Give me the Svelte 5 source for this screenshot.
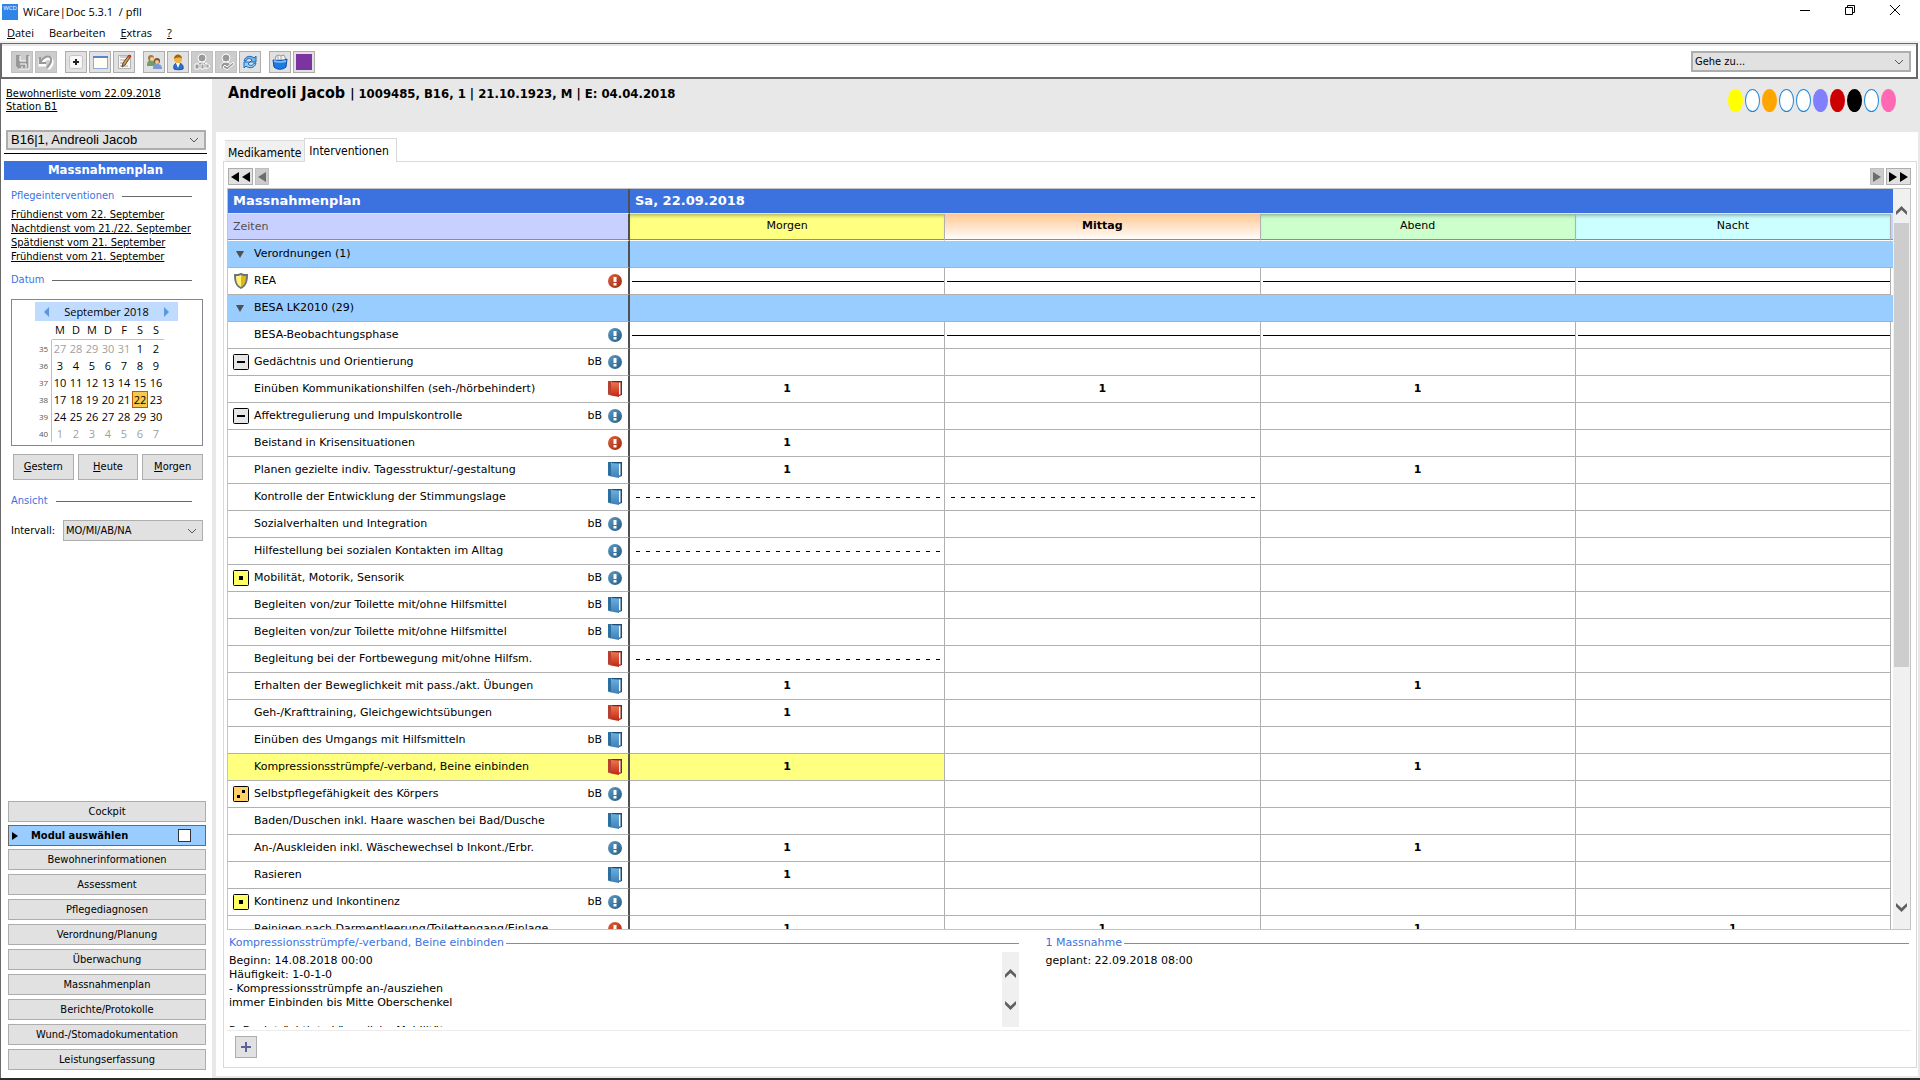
<script lang="ts">
	type Mark = 'info' | 'alert' | 'book' | 'redbook';
	type Row = {
		label: string;
		lead?: 'shield' | 'minus' | 'one' | 'two';
		group?: boolean;
		bb?: boolean;
		mark?: Mark;
		cells?: string[];
		selected?: boolean;
	};

	const shifts = ['Morgen', 'Mittag', 'Abend', 'Nacht'];

	// cell values: '' empty, '1' planned, 'line' continuous, 'dash' on demand
	const rows: Row[] = [
		{ label: 'Verordnungen (1)', group: true },
		{ label: 'REA', lead: 'shield', mark: 'alert', cells: ['line', 'line', 'line', 'line'] },
		{ label: 'BESA LK2010 (29)', group: true },
		{ label: 'BESA-Beobachtungsphase', mark: 'info', cells: ['line', 'line', 'line', 'line'] },
		{ label: 'Gedächtnis und Orientierung', lead: 'minus', bb: true, mark: 'info' },
		{ label: 'Einüben Kommunikationshilfen (seh-/hörbehindert)', mark: 'redbook', cells: ['1', '1', '1', ''] },
		{ label: 'Affektregulierung und Impulskontrolle', lead: 'minus', bb: true, mark: 'info' },
		{ label: 'Beistand in Krisensituationen', mark: 'alert', cells: ['1', '', '', ''] },
		{ label: 'Planen gezielte indiv. Tagesstruktur/-gestaltung', mark: 'book', cells: ['1', '', '1', ''] },
		{ label: 'Kontrolle der Entwicklung der Stimmungslage', mark: 'book', cells: ['dash', 'dash', '', ''] },
		{ label: 'Sozialverhalten und Integration', bb: true, mark: 'info' },
		{ label: 'Hilfestellung bei sozialen Kontakten im Alltag', mark: 'info', cells: ['dash', '', '', ''] },
		{ label: 'Mobilität, Motorik, Sensorik', lead: 'one', bb: true, mark: 'info' },
		{ label: 'Begleiten von/zur Toilette mit/ohne Hilfsmittel', bb: true, mark: 'book' },
		{ label: 'Begleiten von/zur Toilette mit/ohne Hilfsmittel', bb: true, mark: 'book' },
		{ label: 'Begleitung bei der Fortbewegung mit/ohne Hilfsm.', mark: 'redbook', cells: ['dash', '', '', ''] },
		{ label: 'Erhalten der Beweglichkeit mit pass./akt. Übungen', mark: 'book', cells: ['1', '', '1', ''] },
		{ label: 'Geh-/Krafttraining, Gleichgewichtsübungen', mark: 'redbook', cells: ['1', '', '', ''] },
		{ label: 'Einüben des Umgangs mit Hilfsmitteln', bb: true, mark: 'book' },
		{ label: 'Kompressionsstrümpfe/-verband, Beine einbinden', mark: 'redbook', cells: ['1', '', '1', ''], selected: true },
		{ label: 'Selbstpflegefähigkeit des Körpers', lead: 'two', bb: true, mark: 'info' },
		{ label: 'Baden/Duschen inkl. Haare waschen bei Bad/Dusche', mark: 'book' },
		{ label: 'An-/Auskleiden inkl. Wäschewechsel b Inkont./Erbr.', mark: 'info', cells: ['1', '', '1', ''] },
		{ label: 'Rasieren', mark: 'book', cells: ['1', '', '', ''] },
		{ label: 'Kontinenz und Inkontinenz', lead: 'one', bb: true, mark: 'info' },
		{ label: 'Reinigen nach Darmentleerung/Toilettengang/Einlage', mark: 'alert', cells: ['1', '1', '1', '1'] }
	];

	const empty = ['', '', '', ''];

	const services = [
		'Frühdienst vom 22. September',
		'Nachtdienst vom 21./22. September',
		'Spätdienst vom 21. September',
		'Frühdienst vom 21. September'
	];

	const weeks = [
		{ nr: 35, days: [27, 28, 29, 30, 31, 1, 2] },
		{ nr: 36, days: [3, 4, 5, 6, 7, 8, 9] },
		{ nr: 37, days: [10, 11, 12, 13, 14, 15, 16] },
		{ nr: 38, days: [17, 18, 19, 20, 21, 22, 23] },
		{ nr: 39, days: [24, 25, 26, 27, 28, 29, 30] },
		{ nr: 40, days: [1, 2, 3, 4, 5, 6, 7] }
	];

	const modules = [
		'Bewohnerinformationen',
		'Assessment',
		'Pflegediagnosen',
		'Verordnung/Planung',
		'Überwachung',
		'Massnahmenplan',
		'Berichte/Protokolle',
		'Wund-/Stomadokumentation',
		'Leistungserfassung'
	];

	const flags = ['yellow', 'none', 'orange', 'none', 'none', 'violet', 'red', 'black', 'none', 'pink'];

	const tools = [
		[{ id: 'save', off: true }, { id: 'undo', off: true }],
		[{ id: 'add' }, { id: 'window' }, { id: 'edit' }],
		[{ id: 'group' }, { id: 'person' }, { id: 'link', off: true }, { id: 'check', off: true }, { id: 'refresh' }],
		[{ id: 'files' }, { id: 'purple' }]
	] as { id: string; off?: boolean }[][];

	const note =
		'Beginn: 14.08.2018 00:00\nHäufigkeit: 1-0-1-0\n- Kompressionsstrümpfe an-/ausziehen\nimmer Einbinden bis Mitte Oberschenkel\n\nP: Beeinträchtigte körperliche Mobilität';

	let tab = $state('Interventionen');
	let interval = $state('MO/MI/AB/NA');

	function isOutside(week: number, day: number) {
		return (week === 35 && day > 20) || week === 40;
	}
</script>

{#snippet toolIcon(id: string)}
	<svg viewBox="0 0 18 18" width="18" height="18" aria-hidden="true">
		{#if id === 'save'}
			<path d="M3 2h4v6h6V2h3v14H6l-3-3z" fill="#999" />
			<path d="M7 11h6v4M16 3v13H6M7 3v5h6M9 13v2" fill="none" stroke="#fff" />
		{:else if id === 'undo'}
			<path d="M3 6v6h6M4 12C6 6 13 3 15 8c1 4-2 6-4 8" fill="none" stroke="#fff" stroke-width="3" />
			<path d="M3 4v6h6M3 10C6 4 12 1 14 6c1 4-2 6-4 9" fill="none" stroke="#999" stroke-width="2" />
		{:else if id === 'add'}
			<rect x="2.500" y="2.500" width="13" height="13" rx="2" fill="#f8f8f8" stroke="#c4c4c4" />
			<path d="M9 6v6M6 9h6" stroke="#222" stroke-width="2" />
		{:else if id === 'window'}
			<rect x="2.500" y="3.500" width="14" height="12" fill="#fffff4" stroke="#8fabd8" />
			<path d="M2 4h15" stroke="#5c82d8" stroke-width="2" />
		{:else if id === 'edit'}
			<rect x="3.500" y="2.500" width="12" height="13" fill="#f8f8f8" stroke="#b4b4b4" />
			<path d="M5 4h9M5 7h6M5 10h4M5 13h8" stroke="#aaa" />
			<path d="M14 2l2 1-6 9-3 2 1-4z" fill="#d79a4a" stroke="#5c4326" />
			<path d="M14 2l2 1-1 2-2-1z" fill="#cf3a3a" />
		{:else if id === 'group'}
			<path d="M2 13c0-4 1-6 4-6s5 2 5 6z" fill="#6aa06a" />
			<circle cx="6" cy="5" r="3" fill="#a8793e" />
			<circle cx="7" cy="6" r="2" fill="#f2cfa0" />
			<path d="M8 16c0-4 1-5 4-5s5 1 5 5z" fill="#7b9ad4" />
			<circle cx="12" cy="8" r="3" fill="#7a5226" />
			<circle cx="12" cy="9" r="2" fill="#f0c896" />
		{:else if id === 'person'}
			<path d="M5 16c-1-4 1-6 4-6s6 2 5 6c-3 1-6 1-9 0z" fill="#2f6fc9" stroke="#1c4f9c" />
			<path d="M7 10l2 5 2-5z" fill="#fff" />
			<circle cx="9" cy="6" r="4" fill="#f4b53f" />
			<path d="M5 6c0-6 8-6 8 0 0-2-6-2-8 0z" fill="#a0620c" />
		{:else if id === 'link' || id === 'check'}
			<g fill="#999" stroke="#fff">
				<path d="M4 15c-1-4 2-6 5-6s5 2 5 5" />
				<circle cx="9" cy="5" r="4" />
				{#if id === 'link'}
					<path d="M2 11h4v5H2zM8 11h3v5H8zM13 10l4 3-4 3z" />
				{:else}
					<path d="M8 12l2 2 6-5 1 2-7 6-4-3z" />
				{/if}
			</g>
		{:else if id === 'refresh'}
			<path d="M3 8c1-5 7-6 10-3l2-2v6H9l2-2C9 5 6 5 5 8z" fill="#6ab8f2" stroke="#1d66b8" />
			<path d="M15 10c-1 5-7 6-10 3l-2 2V9h6l-2 2c2 2 5 2 6-1z" fill="#8fd0fa" stroke="#1d66b8" />
		{:else if id === 'files'}
			<path d="M4 7l1-4 3-1 2 1 3-1 2 5z" fill="#f4f4f4" stroke="#999" />
			<path d="M7 3v4M10 3v4" stroke="#aaa" />
			<path d="M2 7c3 1 11 1 14-1l-1 8c-3 3-9 3-12 0z" fill="#1f7ae0" stroke="#0f4fa8" />
			<path d="M3 8c3 1 9 1 12 0" stroke="#7cc0ff" fill="none" stroke-width="2" />
		{:else}
			<rect x="1" y="1" width="16" height="16" fill="#7c35a0" />
		{/if}
	</svg>
{/snippet}

{#snippet markIcon(mark: Mark)}
	<svg viewBox="0 0 14 16" width="14" height="16" aria-hidden="true">
		{#if mark === 'info' || mark === 'alert'}
			<circle cx="7" cy="8" r="7" fill={mark === 'info' ? 'url(#blue-ball)' : 'url(#red-ball)'} />
			<path d="M5.500 4h3v5h-3zM5.500 10h3v2.500h-3z" fill="#fff" />
		{:else}
			<path d="M3 0h11v14l-3 1z" fill={mark === 'book' ? '#1b4d78' : '#7c2418'} />
			<path d="M11 1.500h1.500v12H11z" fill="#f2f4f6" />
			<path d="M0 0h3v14.500l-3-1z" fill={mark === 'book' ? '#2a6f9f' : '#b8402e'} />
			<path d="M3 1l8 .5V16l-8-1.500z" fill={mark === 'book' ? 'url(#blue-book)' : 'url(#red-book)'} />
		{/if}
	</svg>
{/snippet}

{#snippet leadIcon(lead: string)}
	{#if lead === 'shield'}
		<svg viewBox="0 0 16 16" width="16" height="16" aria-hidden="true">
			<path d="M1 1c3 0 5 0 7-1 2 1 4 1 7 1 0 7-1 12-7 15C2 13 1 8 1 1z" fill="#6c7278" />
			<path d="M3 3c2 0 3 0 5-1v12c-4-2-5-6-5-11z" fill="#fff27a" />
			<path d="M13 3c-2 0-3 0-5-1v12c4-2 5-6 5-11z" fill="#dcb918" />
		</svg>
	{:else}
		<svg viewBox="0 0 16 16" width="16" height="16" aria-hidden="true">
			<rect
				x="0.500"
				y="0.500"
				width="15"
				height="15"
				rx="1"
				fill={lead === 'minus' ? '#e6e6e6' : lead === 'one' ? '#ffff66' : '#ffd166'}
				stroke="#000"
			/>
			{#if lead === 'minus'}
				<path d="M4 8h8" stroke="#000" stroke-width="2" />
			{:else if lead === 'one'}
				<path d="M6 6h4v4H6z" />
			{:else}
				<path d="M9 4h3v3H9zM4 9h3v3H4z" />
			{/if}
		</svg>
	{/if}
{/snippet}

{#snippet chevron(up: boolean)}
	<svg viewBox="0 0 11 9" width="11" height="9" aria-hidden="true">
		<path d={up ? 'M0 9V5.500L5.500 0 11 5.500V9L5.500 4z' : 'M0 0v3.500L5.500 9 11 3.500V0L5.500 5z'} fill="#606060" />
	</svg>
{/snippet}

{#snippet arrow(left: boolean)}
	<svg viewBox="0 0 8 10" width="8" height="10" aria-hidden="true">
		<path d={left ? 'M8 0v10L0 5z' : 'M0 0v10l8-5z'} fill="currentColor" />
	</svg>
{/snippet}

<div class="app">
	<header class="titlebar">
		<svg class="logo" viewBox="0 0 16 16" width="16" height="16" role="img" aria-label="WCD">
			<defs>
				<linearGradient id="blue-ball" x2="1" y2="1">
					<stop stop-color="#5b9cc8" /><stop offset="1" stop-color="#255a80" />
				</linearGradient>
				<linearGradient id="red-ball" x2="1" y2="1">
					<stop stop-color="#e0613c" /><stop offset="1" stop-color="#9c2a12" />
				</linearGradient>
				<linearGradient id="blue-book" x2="0" y2="1">
					<stop stop-color="#6aaede" /><stop offset="1" stop-color="#3f7fb4" />
				</linearGradient>
				<linearGradient id="red-book" x2="0" y2="1">
					<stop stop-color="#ee7552" /><stop offset="1" stop-color="#c02512" />
				</linearGradient>
			</defs>
			<rect width="16" height="16" fill="#2f86e8" />
			<text x="8" y="6" text-anchor="middle" font-size="6" fill="#fff">WCD</text>
		</svg>
		<span class="caption">WiCare|Doc 5.3.1&nbsp; / pfll</span>
		<div class="window-buttons">
			<button aria-label="Minimieren">
				<svg viewBox="0 0 12 12" width="12" height="12"><path d="M1 6.500h10" stroke="#000" /></svg>
			</button>
			<button aria-label="Verkleinern">
				<svg viewBox="0 0 12 12" width="12" height="12">
					<path d="M1.500 3.500h7v7h-7zM3.500 3V1.500h7v7H9" fill="none" stroke="#000" />
				</svg>
			</button>
			<button aria-label="Schliessen">
				<svg viewBox="0 0 12 12" width="12" height="12"><path d="M1 1l10 10M11 1L1 11" stroke="#000" /></svg>
			</button>
		</div>
	</header>

	<nav class="menubar">
		<button><u>D</u>atei</button>
		<button>Bearbeiten</button>
		<button><u>E</u>xtras</button>
		<button><u>?</u></button>
	</nav>

	<div class="toolbar">
		{#each tools as set}
			<div class="tool-set">
				{#each set as tool}
					<button class="tool" class:tool--off={tool.off} disabled={tool.off} aria-label={tool.id}>
						{@render toolIcon(tool.id)}
					</button>
				{/each}
			</div>
		{/each}
		<select class="goto" aria-label="Gehe zu">
			<option>Gehe zu...</option>
		</select>
	</div>

	<div class="workspace">
		<aside class="sidebar">
			<a class="list-link" href="#liste">Bewohnerliste vom 22.09.2018<br />Station B1</a>
			<select class="resident" aria-label="Bewohner">
				<option>B16|1, Andreoli Jacob</option>
			</select>
			<h2 class="module-title">Massnahmenplan</h2>

			<h3 class="section">Pflegeinterventionen</h3>
			<ul class="services">
				{#each services as service}
					<li><a href="#dienst">{service}</a></li>
				{/each}
			</ul>

			<h3 class="section">Datum</h3>
			<div class="calendar">
				<div class="month">
					<button aria-label="Vorheriger Monat">
						<svg viewBox="0 0 5 10" width="5" height="10"><path d="M5 0v10L0 5z" fill="#5b97dc" /></svg>
					</button>
					<span>September 2018</span>
					<button aria-label="Nächster Monat">
						<svg viewBox="0 0 5 10" width="5" height="10"><path d="M0 0v10l5-5z" fill="#5b97dc" /></svg>
					</button>
				</div>
				<table class="days">
					<thead>
						<tr>
							<td></td>
							{#each ['M', 'D', 'M', 'D', 'F', 'S', 'S'] as day}
								<th>{day}</th>
							{/each}
						</tr>
					</thead>
					<tbody>
						{#each weeks as week}
							<tr>
								<th class="week">{week.nr}</th>
								{#each week.days as day}
									<td
										class:outside={isOutside(week.nr, day)}
										class:today={week.nr === 38 && day === 22}>{day}</td
									>
								{/each}
							</tr>
						{/each}
					</tbody>
				</table>
			</div>
			<div class="day-buttons">
				<button><u>G</u>estern</button>
				<button><u>H</u>eute</button>
				<button><u>M</u>orgen</button>
			</div>

			<h3 class="section">Ansicht</h3>
			<div class="interval">
				<label for="interval">Intervall:</label>
				<select id="interval" bind:value={interval}>
					<option>MO/MI/AB/NA</option>
				</select>
			</div>

			<nav class="modules">
				<button class="module">Cockpit</button>
				<div class="module-pick">
					<svg viewBox="0 0 6 8" width="6" height="8" aria-hidden="true"><path d="M0 0v8l6-4z" /></svg>
					<label for="pick">Modul auswählen</label>
					<input id="pick" type="checkbox" />
				</div>
				{#each modules as module}
					<button class="module">{module}</button>
				{/each}
			</nav>
		</aside>

		<main class="main">
			<header class="patient">
				<h1>Andreoli Jacob <small>| 1009485, B16, 1 | 21.10.1923, M | E: 04.04.2018</small></h1>
				<div class="flags">
					{#each flags as flag}
						<span class="flag flag--{flag}"></span>
					{/each}
				</div>
			</header>

			<div class="content">
				<div class="tabs" role="tablist">
					{#each ['Medikamente', 'Interventionen'] as name}
						<button
							class="tab"
							class:tab--active={tab === name}
							role="tab"
							aria-selected={tab === name}
							onclick={() => (tab = name)}>{name}</button
						>
					{/each}
				</div>

				<section class="panel">
					<div class="pager">
						<button aria-label="Tag zurück">{@render arrow(true)}{@render arrow(true)}</button>
						<button aria-label="Zurück" disabled>{@render arrow(true)}</button>
						<span class="spacer"></span>
						<button aria-label="Vor" disabled>{@render arrow(false)}</button>
						<button aria-label="Tag vor">{@render arrow(false)}{@render arrow(false)}</button>
					</div>

					<div class="plan">
						<div class="plan-view">
							<table class="grid">
								<colgroup>
									<col class="col-name" />
									<col /><col /><col /><col />
									<col class="col-end" />
								</colgroup>
								<thead>
									<tr class="dates">
										<th>Massnahmenplan</th>
										<th colspan="5">Sa, 22.09.2018</th>
									</tr>
									<tr class="shifts">
										<th>Zeiten</th>
										{#each shifts as shift}
											<th class="shift shift--{shift.toLowerCase()}">{shift}</th>
										{/each}
										<td></td>
									</tr>
								</thead>
								<tbody>
									{#each rows as row}
										<tr class:group={row.group} class:selected={row.selected}>
											<th>
												<div class="name">
													<span class="lead">
														{#if row.group}
															<svg viewBox="0 0 8 7" width="8" height="7" aria-hidden="true">
																<path d="M0 0h8L4 7z" fill="#505050" />
															</svg>
														{:else if row.lead}
															{@render leadIcon(row.lead)}
														{/if}
													</span>
													<span class="label">{row.label}</span>
													{#if row.bb}<span>bB</span>{/if}
													{#if row.mark}{@render markIcon(row.mark)}{/if}
												</div>
											</th>
											{#if row.group}
												<td colspan="5"></td>
											{:else}
												{#each row.cells ?? empty as cell}
													<td>
														{#if cell === 'line' || cell === 'dash'}
															<div class={cell}></div>
														{:else}
															{cell}
														{/if}
													</td>
												{/each}
												<td class="end"></td>
											{/if}
										</tr>
									{/each}
								</tbody>
							</table>
						</div>
						<div class="scrollbar">
							{@render chevron(true)}
							<div class="track"><div class="thumb"></div></div>
							{@render chevron(false)}
						</div>
					</div>

					<div class="details">
						<section class="detail detail--text">
							<h3>Kompressionsstrümpfe/-verband, Beine einbinden</h3>
							<div class="note">
								<textarea readonly aria-label="Beschreibung" value={note}></textarea>
								<div class="scrollbar scrollbar--small">
									{@render chevron(true)}
									{@render chevron(false)}
								</div>
							</div>
						</section>
						<section class="detail">
							<h3>1 Massnahme</h3>
							<p>geplant: 22.09.2018 08:00</p>
						</section>
					</div>

					<footer class="actions">
						<button aria-label="Hinzufügen">
							<svg viewBox="0 0 10 10" width="10" height="10">
								<path d="M5 0v10M0 5h10" stroke="#60609c" stroke-width="2" />
							</svg>
						</button>
					</footer>
				</section>
			</div>
		</main>
	</div>
	<div class="taskbar"></div>
</div>

<style>
	:global(body) {
		margin: 0;
	}

	.app {
		--ui: 'DejaVu Sans Condensed', 'DejaVu Sans', sans-serif;
		--wide: 'DejaVu Sans', sans-serif;
		--frame: 'Open Sans', sans-serif;
		--blue: #3c72e0;
		--line: #b0b0b0;
		--face: #e1e1e1;
		--edge: #adadad;

		display: flex;
		flex-direction: column;
		height: 100vh;
		background: #fff;
		color: #000;
		font: 11px/14px var(--wide);
	}

	.app *,
	.app *::before,
	.app *::after {
		box-sizing: border-box;
	}

	svg {
		display: block;
		flex-shrink: 0;
	}

	button,
	select,
	textarea {
		margin: 0;
		padding: 0;
		border: 0;
		border-radius: 0;
		background: none;
		color: inherit;
		font: inherit;
	}

	h1,
	h2,
	h3,
	p,
	ul {
		margin: 0;
		padding: 0;
		font: inherit;
	}

	select {
		appearance: none;
		border: 1px solid var(--edge);
		background: var(--face)
			url("data:image/svg+xml,%3Csvg xmlns='http://www.w3.org/2000/svg' width='10' height='6'%3E%3Cpath d='M1 1l4 4 4-4' fill='none' stroke='%23555'/%3E%3C/svg%3E")
			no-repeat right 5px center;
	}

	/* window frame */
	.titlebar {
		display: flex;
		align-items: center;
		height: 23px;
		padding-left: 2px;
		font: 11px/16px var(--frame);
	}

	.caption {
		margin-left: 5px;
	}

	.window-buttons {
		display: flex;
		gap: 33px;
		margin-left: auto;
		padding: 0 19px 3px 0;
	}

	.menubar {
		display: flex;
		gap: 15px;
		height: 20px;
		padding: 2px 7px 0;
		border-bottom: 2px solid #f0f0f0;
		font: 11px/16px var(--frame);
	}

	.toolbar {
		display: flex;
		align-items: center;
		gap: 8px;
		height: 36px;
		margin-right: 2px;
		padding: 2px 5px 0 9px;
		border: solid #696969;
		border-width: 1px 2px 2px;
		box-shadow: inset 0 2px #e8e8e8;
	}

	.tool-set {
		display: flex;
		gap: 2px;
	}

	.tool {
		display: grid;
		place-items: center;
		width: 22px;
		height: 22px;
		border: 1px solid var(--edge);
		background: var(--face);
	}

	.tool--off {
		background: #ccc;
		border-color: #bfbfbf;
	}

	.goto {
		width: 220px;
		height: 21px;
		margin-left: auto;
		padding-left: 2px;
		border: 2px solid var(--edge);
		font-family: var(--ui);
	}

	.workspace {
		display: flex;
		flex: 1;
		min-height: 0;
		border-left: 1px solid #696969;
	}

	.taskbar {
		height: 2px;
		background: #2d2d30;
	}

	/* sidebar */
	.sidebar {
		display: flex;
		flex-direction: column;
		flex: 0 0 211px;
		padding: 8px 6px 8px 5px;
		font-family: var(--ui);
	}

	a {
		color: inherit;
		text-decoration: underline;
	}

	.list-link {
		line-height: 13px;
	}

	.resident {
		height: 20px;
		margin-top: 17px;
		padding-left: 3px;
		border: 2px solid var(--edge);
		font: 13px/16px 'Liberation Sans', sans-serif;
	}

	.module-title {
		height: 27px;
		margin: 3px -1px 0 -2px;
		padding-top: 7px;
		border-top: 1px solid #000;
		background: var(--blue) linear-gradient(#fff, #fff) no-repeat 0 0 / 100% 7px;
		color: #fff;
		font: bold 13px/18px var(--ui);
		text-align: center;
	}

	.section {
		display: flex;
		align-items: center;
		gap: 8px;
		margin: 9px 14px 0 5px;
		color: var(--blue);
	}

	.section::after {
		content: '';
		flex: 1;
		height: 1px;
		background: #696969;
	}

	.services {
		margin: 5px 5px 0;
		list-style: none;
	}

	.calendar {
		margin: 12px 3px 0 5px;
		padding: 2px 0 3px;
		border: 1px solid #828790;
	}

	.month {
		display: flex;
		justify-content: space-between;
		align-items: center;
		height: 19px;
		margin: 0 24px 0 23px;
		padding: 0 9px;
		background: #bfdbff;
		font: 11px/16px var(--frame);
	}

	.days {
		margin-left: 24px;
		border-spacing: 0;
		font: 11px/16px var(--frame);
		text-align: center;
	}

	.days th,
	.days td {
		width: 16px;
		height: 17px;
		padding: 0;
		font-weight: normal;
	}

	.days thead th {
		height: 19px;
		border-bottom: 1px solid #99c8ff;
	}

	.days .week {
		border-right: 1px solid #99c8ff;
		color: #555;
		font-size: 8px;
	}

	.days .outside {
		color: #a0a0a0;
	}

	.days .today {
		border: 1px solid #c05a00;
		background: #f8c84c;
		line-height: 14px;
	}

	.day-buttons {
		display: flex;
		gap: 4px;
		margin: 8px 3px 5px 7px;
	}

	.day-buttons button {
		flex: 1;
		height: 26px;
		border: 1px solid var(--edge);
		background: var(--face);
	}

	.interval {
		display: flex;
		align-items: center;
		justify-content: space-between;
		margin: 12px 3px 0 5px;
	}

	.interval select {
		width: 140px;
		height: 21px;
		padding-left: 2px;
	}

	.modules {
		display: flex;
		flex-direction: column;
		gap: 4px;
		margin: auto 0 0 2px;
	}

	.module {
		height: 21px;
		border: 1px solid var(--edge);
		background: var(--face);
	}

	.module-pick {
		display: flex;
		align-items: center;
		height: 21px;
		margin: -1px 0;
		padding: 0 14px 0 3px;
		border: 1px solid #696969;
		background: #99ccff;
		font-weight: bold;
	}

	.module-pick label {
		flex: 1;
		margin-left: 13px;
	}

	.module-pick input {
		appearance: none;
		width: 13px;
		height: 13px;
		margin: 0;
		border: 1px solid #333;
		background: #fff;
	}

	/* main area */
	.main {
		display: flex;
		flex: 1;
		flex-direction: column;
		min-width: 0;
		background: #e8e8e8;
	}

	.patient {
		display: flex;
		justify-content: space-between;
		height: 53px;
		padding: 4px 24px 0 16px;
	}

	.patient h1 {
		font: bold 16px/20px var(--ui);
	}

	.patient small {
		font-size: 13px;
	}

	.flags {
		display: flex;
		gap: 2px;
		padding-top: 6px;
	}

	.flag {
		width: 15px;
		height: 23px;
		border-radius: 50%;
	}

	.flag--none {
		border: 1px solid #1e86d8;
		background: #fff;
	}

	.flag--yellow {
		background: #ffff00;
	}

	.flag--orange {
		background: #ffa500;
	}

	.flag--violet {
		background: #8080ff;
	}

	.flag--red {
		background: #cc0000;
	}

	.flag--black {
		background: #000;
	}

	.flag--pink {
		background: #ff69b4;
	}

	.content {
		display: flex;
		flex: 1;
		flex-direction: column;
		min-height: 0;
		margin: 0 2px 2px 4px;
		padding: 6px 1px 8px 7px;
		background: #fff;
	}

	.tabs {
		display: flex;
		align-items: flex-end;
		height: 24px;
		padding-left: 2px;
	}

	.tab {
		height: 21px;
		margin-bottom: 1px;
		padding: 3px 3px 0;
		border-top: 1px solid #d9d9d9;
		background: #f0f0f0;
		font: 12px/16px var(--ui);
	}

	.tab--active {
		z-index: 1;
		height: 24px;
		margin-bottom: 0;
		padding: 1px 7px 0 4px;
		border: 1px solid #d9d9d9;
		border-bottom: 0;
		background: #fff;
	}

	.panel {
		display: flex;
		flex: 1;
		flex-direction: column;
		min-height: 0;
		margin-top: -1px;
		padding: 6px 5px 0 3px;
		border: 1px solid #d9d9d9;
	}

	.pager {
		display: flex;
		gap: 2px;
		height: 17px;
		margin: 0 0 3px 1px;
	}

	.pager button {
		display: flex;
		align-items: center;
		gap: 3px;
		padding: 0 2px;
		border: 1px solid var(--edge);
		background: var(--face);
	}

	.pager button:disabled {
		border-color: #bfbfbf;
		background: #ccc;
		color: #6d6d6d;
	}

	.spacer {
		flex: 1;
	}

	/* plan table */
	.plan {
		display: flex;
		flex: 1;
		min-height: 0;
		border: 1px solid #c4c4c4;
	}

	.plan-view {
		flex: 1;
		overflow: hidden;
	}

	.grid {
		width: 100%;
		border-spacing: 0;
		table-layout: fixed;
	}

	.col-name {
		width: 402px;
	}

	.col-end {
		width: 2px;
	}

	.grid th,
	.grid td {
		height: 27px;
		padding: 0;
		border-right: 1px solid var(--line);
		border-bottom: 1px solid var(--line);
		font-weight: bold;
		text-align: center;
	}

	.grid th:first-child {
		border-right: 2px solid #505050;
		font-weight: normal;
		text-align: left;
	}

	.grid tr > :last-child {
		border-right: 0;
	}

	.grid .end {
		border-bottom: 0;
	}

	.grid .dates th {
		height: 25px;
		padding-left: 5px;
		border-bottom-color: #dde6fa;
		background: var(--blue);
		color: #fff;
		font: bold 13px/16px var(--wide);
		text-align: left;
	}

	.grid .shifts > * {
		border-bottom-color: #fff;
		background: #c8d0ff;
		box-shadow: inset 0 -1px #8c8c8c;
	}

	.grid .shifts th:first-child {
		padding-left: 5px;
		color: #505050;
	}

	.grid .shifts .shift {
		padding-bottom: 3px;
		box-shadow:
			inset 0 -1px #8c8c8c,
			inset 0 4px 4px -3px rgb(0 0 0 / 40%);
		font-weight: normal;
	}

	.grid .shifts .shift--morgen {
		background: #ffff80;
	}

	.grid .shifts .shift--mittag {
		background: linear-gradient(#ffc894, #fff);
		box-shadow: inset 0 -1px #8c8c8c;
		font-weight: bold;
	}

	.grid .shifts .shift--abend {
		background: #ccffcc;
	}

	.grid .shifts .shift--nacht {
		background: #ccffff;
	}

	.group > * {
		background: #99ccff;
	}

	.selected th,
	.selected td:nth-child(2) {
		background: #ffff80;
	}

	.name {
		display: flex;
		align-items: center;
		gap: 6px;
		padding: 0 6px 0 5px;
	}

	.lead {
		flex: 0 0 16px;
	}

	.group .lead {
		padding-left: 3px;
	}

	.name .label {
		flex: 1;
		margin-left: -1px;
		white-space: nowrap;
	}

	.line {
		height: 1px;
		margin-left: 2px;
		background: #000;
	}

	.dash {
		height: 1px;
		margin: 0 3px 0 6px;
		background: repeating-linear-gradient(90deg, #000 0 4px, transparent 4px 10px);
	}

	.scrollbar {
		display: flex;
		flex: 0 0 17px;
		flex-direction: column;
		align-items: center;
		gap: 7px;
		padding: 17px 0;
		background: #f0f0f0;
	}

	.track {
		flex: 1;
		align-self: stretch;
		padding: 1px;
	}

	.thumb {
		height: 66%;
		background: #cdcdcd;
	}

	/* details */
	.details {
		display: flex;
		gap: 27px;
		padding: 6px 2px 3px;
		border-bottom: 1px solid #ececec;
	}

	.detail {
		flex: 1 1 0;
	}

	.detail--text {
		flex: 0 0 47%;
	}

	.detail h3 {
		display: flex;
		align-items: center;
		gap: 2px;
		color: var(--blue);
	}

	.detail h3::after {
		content: '';
		flex: 1;
		height: 1px;
		background: #8c8c8c;
	}

	.detail p {
		margin-top: 4px;
	}

	.note {
		display: flex;
		height: 75px;
		margin-top: 2px;
	}

	.note textarea {
		flex: 1;
		padding-top: 2px;
		outline: 0;
		overflow: hidden;
		resize: none;
	}

	.scrollbar--small {
		justify-content: space-between;
	}

	.actions {
		padding: 5px 8px 9px;
	}

	.actions button {
		display: grid;
		place-items: center;
		width: 22px;
		height: 22px;
		border: 1px solid var(--edge);
		background: var(--face);
	}
</style>
